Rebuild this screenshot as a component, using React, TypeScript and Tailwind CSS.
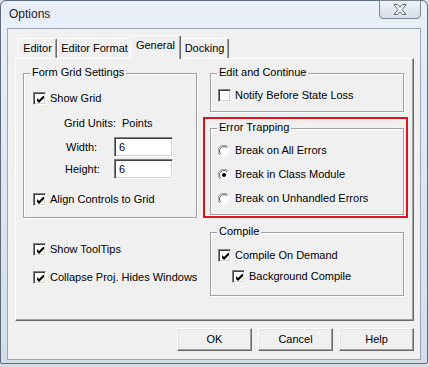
import type { ReactNode } from "react";

function Check({ on }: { on?: boolean }) {
  return (
    <span className="flex h-[13px] w-[13px] shrink-0 items-center justify-center border border-t-[#808080] border-l-[#808080] border-r-white border-b-white bg-white shadow-[inset_1px_1px_0_#404040,inset_-1px_-1px_0_#d4d0c8]">
      {on && (
        <svg width="7" height="7" viewBox="0 0 7 7" className="ml-[1px] mt-[1px]">
          <path d="M0 2 L2 4 L7 -1 L7 2 L2 7 L0 5 Z" fill="#000" />
        </svg>
      )}
    </span>
  );
}

function Radio({ on }: { on?: boolean }) {
  return (
    <svg width="12" height="12" viewBox="0 0 12 12" className="shrink-0">
      <circle cx="6" cy="6" r="5.5" fill="#fff" />
      <path d="M10.2 1.8 A5.9 5.9 0 0 0 1.8 10.2" stroke="#9a9a9a" fill="none" />
      <path d="M9.2 2.8 A4.5 4.5 0 0 0 2.8 9.2" stroke="#5a5a5a" fill="none" />
      {on && <circle cx="6" cy="6" r="2" fill="#000" />}
    </svg>
  );
}

function Row({ children, className = "" }: { children: ReactNode; className?: string }) {
  return <div className={`flex h-[13px] items-center gap-[4px] whitespace-nowrap ${className}`}>{children}</div>;
}

function Group({ title, className, children }: { title: string; className: string; children: ReactNode }) {
  return (
    <div className={`relative border border-[#a0a0a0] shadow-[1px_1px_0_#fff,inset_1px_1px_0_#fff] ${className}`}>
      <span className="absolute -top-[8px] left-[6px] whitespace-nowrap bg-[#f0f0f0] px-[2px] leading-[13px]">{title}</span>
      {children}
    </div>
  );
}

function Field({ value }: { value: string }) {
  return (
    <div className="flex h-[20px] w-[59px] items-center border border-t-[#808080] border-l-[#808080] border-r-white border-b-white bg-white pl-[4px] shadow-[inset_1px_1px_0_#404040,inset_-1px_-1px_0_#d4d0c8]">
      {value}
    </div>
  );
}

function Button({ label }: { label: string }) {
  return (
    <div className="flex h-[23px] w-[75px] items-center justify-center border border-t-white border-l-white border-r-[#696969] border-b-[#696969] shadow-[inset_-1px_-1px_0_#a0a0a0,inset_1px_1px_0_#e3e3e3]">
      {label}
    </div>
  );
}

const tabs = [
  { label: "Editor", w: "w-[39px]" },
  { label: "Editor Format", w: "w-[75px]" },
  { label: "General", w: "w-[51px]", active: true },
  { label: "Docking", w: "w-[49px]" },
];

export default function App() {
  return (
    <div className="h-[367px] w-[429px] overflow-hidden bg-[#d9dde3] font-['Liberation_Sans',Arial,sans-serif] text-[11px] leading-[13px] text-black">
      <div className="relative h-[364px] w-[428px] rounded-t-[6px] rounded-b-[2px] border border-[#5f6b7a] bg-gradient-to-b from-[#e9f0f9] via-[#dde7f3] to-[#d2deec] px-[6px] pb-[3px] pt-[27px]">
        {/* title bar */}
        <span className="absolute left-[8px] top-[6px] text-[12px] leading-[15px] text-[#1c1c1c]">Options</span>
        <div className="absolute right-[6px] top-[-1px] flex h-[19px] w-[42px] items-center justify-center rounded-b-[4px] border border-[#7c8796] bg-gradient-to-b from-[#eef2f7] to-[#d6dfea]">
          <svg width="14" height="11" viewBox="0 0 14 11">
            <path
              d="M1 0.5 H4.5 L7 3.3 L9.5 0.5 H13 L9 5.5 L13 10.5 H9.5 L7 7.7 L4.5 10.5 H1 L5 5.5 Z"
              fill="#fff"
              stroke="#5b6470"
              strokeWidth="1"
            />
          </svg>
        </div>

        {/* client area */}
        <div className="h-[332px] w-[414px] border border-[#9aa6b6] bg-[#f0f0f0] pl-[7px] pt-[6px]">
          <div className="w-[399px]">
            {/* tabs */}
            <div className="flex h-[23px] items-end pl-[3px]">
              {tabs.map((t) =>
                t.active ? (
                  <div
                    key={t.label}
                    className={`relative z-10 -mb-[1px] -ml-[2px] -mr-[1px] flex h-[24px] items-start justify-center whitespace-nowrap rounded-t-[2px] border border-b-0 border-t-white border-l-white border-r-[#696969] bg-[#f0f0f0] pt-[3px] shadow-[inset_-1px_0_0_#a0a0a0] ${t.w}`}
                  >
                    {t.label}
                  </div>
                ) : (
                  <div
                    key={t.label}
                    className={`flex h-[20px] items-start justify-center whitespace-nowrap rounded-t-[2px] border border-b-0 border-t-white border-l-white border-r-[#696969] pt-[3px] shadow-[inset_-1px_0_0_#a0a0a0] ${t.w}`}
                  >
                    {t.label}
                  </div>
                )
              )}
            </div>

            {/* panel */}
            <div className="flex h-[263px] border border-t-white border-l-white border-r-[#696969] border-b-[#696969] pl-[7px] pt-[14px] shadow-[inset_-1px_-1px_0_#a0a0a0]">
              {/* left column */}
              <div className="flex w-[174px] flex-col">
                <Group title="Form Grid Settings" className="h-[145px]">
                  <Row className="ml-[9px] mt-[18px]">
                    <Check on />
                    <span>Show Grid</span>
                  </Row>
                  <div className="ml-[40px] mt-[12px] flex whitespace-nowrap">
                    <span>Grid Units:</span>
                    <span className="ml-[6px]">Points</span>
                  </div>
                  <div className="ml-[42px] mt-[7px] flex h-[20px] items-center">
                    <span className="w-[48px]">Width:</span>
                    <Field value="6" />
                  </div>
                  <div className="ml-[41px] mt-[2px] flex h-[20px] items-center">
                    <span className="w-[49px]">Height:</span>
                    <Field value="6" />
                  </div>
                  <Row className="ml-[9px] mt-[14px]">
                    <Check on />
                    <span>Align Controls to Grid</span>
                  </Row>
                </Group>
                <Row className="ml-[10px] mt-[25px]">
                  <Check on />
                  <span>Show ToolTips</span>
                </Row>
                <Row className="ml-[10px] mt-[15px]">
                  <Check on />
                  <span>Collapse Proj. Hides Windows</span>
                </Row>
              </div>

              {/* right column */}
              <div className="ml-[13px] flex w-[194px] flex-col">
                <Group title="Edit and Continue" className="h-[39px]">
                  <Row className="ml-[7px] mt-[15px]">
                    <Check />
                    <span>Notify Before State Loss</span>
                  </Row>
                </Group>
                <div className="-ml-[7px] -mr-[4px] mt-[5px] border-2 border-[#e0141c] pb-[1px] pl-[5px] pr-[2px] pt-[9px]">
                  <Group title="Error Trapping" className="h-[87px]">
                    <Row className="ml-[7px] mt-[15px]">
                      <Radio />
                      <span className="ml-[1px]">Break on All Errors</span>
                    </Row>
                    <Row className="ml-[7px] mt-[11px]">
                      <Radio on />
                      <span className="ml-[1px]">Break in Class Module</span>
                    </Row>
                    <Row className="ml-[7px] mt-[11px]">
                      <Radio />
                      <span className="ml-[1px]">Break on Unhandled Errors</span>
                    </Row>
                  </Group>
                </div>
                <Group title="Compile" className="mt-[14px] h-[64px]">
                  <Row className="ml-[7px] mt-[16px]">
                    <Check on />
                    <span>Compile On Demand</span>
                  </Row>
                  <Row className="ml-[21px] mt-[8px]">
                    <Check on />
                    <span>Background Compile</span>
                  </Row>
                </Group>
              </div>
            </div>

            {/* buttons */}
            <div className="mt-[7px] flex justify-end gap-[6px]">
              <Button label="OK" />
              <Button label="Cancel" />
              <Button label="Help" />
            </div>
          </div>
        </div>
      </div>
    </div>
  );
}
